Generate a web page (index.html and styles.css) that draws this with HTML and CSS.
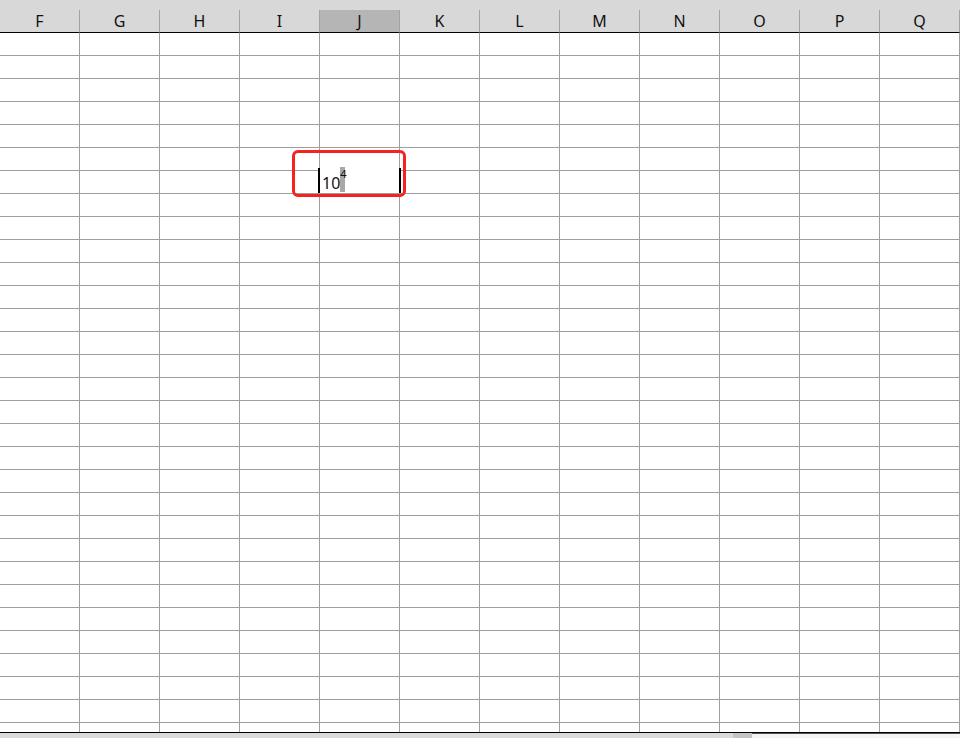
FILE: index.html
```html
<html>
<head>
<meta name="viewport" content="width=device-width, initial-scale=1" />
<title>Sheet1</title>
<link rel="stylesheet" href="styles.css">
</head>
<body>

<div class="sheet">
<div class="viewport">
<table class="grid">
    <thead>
        <tr><th>F</th><th>G</th><th>H</th><th>I</th><th class="sel">J</th><th>K</th><th>L</th><th>M</th><th>N</th><th>O</th><th>P</th><th>Q</th></tr>
    </thead>
    <tbody>
        <tr><td></td><td></td><td></td><td></td><td></td><td></td><td></td><td></td><td></td><td></td><td></td><td></td></tr>
        <tr><td></td><td></td><td></td><td></td><td></td><td></td><td></td><td></td><td></td><td></td><td></td><td></td></tr>
        <tr><td></td><td></td><td></td><td></td><td></td><td></td><td></td><td></td><td></td><td></td><td></td><td></td></tr>
        <tr><td></td><td></td><td></td><td></td><td></td><td></td><td></td><td></td><td></td><td></td><td></td><td></td></tr>
        <tr><td></td><td></td><td></td><td></td><td></td><td></td><td></td><td></td><td></td><td></td><td></td><td></td></tr>
        <tr><td></td><td></td><td></td><td></td><td></td><td></td><td></td><td></td><td></td><td></td><td></td><td></td></tr>
        <tr><td></td><td></td><td></td><td></td><td class="active"><div class="editor">10<span class="sup">4</span></div></td><td></td><td></td><td></td><td></td><td></td><td></td><td></td></tr>
        <tr><td></td><td></td><td></td><td></td><td></td><td></td><td></td><td></td><td></td><td></td><td></td><td></td></tr>
        <tr><td></td><td></td><td></td><td></td><td></td><td></td><td></td><td></td><td></td><td></td><td></td><td></td></tr>
        <tr><td></td><td></td><td></td><td></td><td></td><td></td><td></td><td></td><td></td><td></td><td></td><td></td></tr>
        <tr><td></td><td></td><td></td><td></td><td></td><td></td><td></td><td></td><td></td><td></td><td></td><td></td></tr>
        <tr><td></td><td></td><td></td><td></td><td></td><td></td><td></td><td></td><td></td><td></td><td></td><td></td></tr>
        <tr><td></td><td></td><td></td><td></td><td></td><td></td><td></td><td></td><td></td><td></td><td></td><td></td></tr>
        <tr><td></td><td></td><td></td><td></td><td></td><td></td><td></td><td></td><td></td><td></td><td></td><td></td></tr>
        <tr><td></td><td></td><td></td><td></td><td></td><td></td><td></td><td></td><td></td><td></td><td></td><td></td></tr>
        <tr><td></td><td></td><td></td><td></td><td></td><td></td><td></td><td></td><td></td><td></td><td></td><td></td></tr>
        <tr><td></td><td></td><td></td><td></td><td></td><td></td><td></td><td></td><td></td><td></td><td></td><td></td></tr>
        <tr><td></td><td></td><td></td><td></td><td></td><td></td><td></td><td></td><td></td><td></td><td></td><td></td></tr>
        <tr><td></td><td></td><td></td><td></td><td></td><td></td><td></td><td></td><td></td><td></td><td></td><td></td></tr>
        <tr><td></td><td></td><td></td><td></td><td></td><td></td><td></td><td></td><td></td><td></td><td></td><td></td></tr>
        <tr><td></td><td></td><td></td><td></td><td></td><td></td><td></td><td></td><td></td><td></td><td></td><td></td></tr>
        <tr><td></td><td></td><td></td><td></td><td></td><td></td><td></td><td></td><td></td><td></td><td></td><td></td></tr>
        <tr><td></td><td></td><td></td><td></td><td></td><td></td><td></td><td></td><td></td><td></td><td></td><td></td></tr>
        <tr><td></td><td></td><td></td><td></td><td></td><td></td><td></td><td></td><td></td><td></td><td></td><td></td></tr>
        <tr><td></td><td></td><td></td><td></td><td></td><td></td><td></td><td></td><td></td><td></td><td></td><td></td></tr>
        <tr><td></td><td></td><td></td><td></td><td></td><td></td><td></td><td></td><td></td><td></td><td></td><td></td></tr>
        <tr><td></td><td></td><td></td><td></td><td></td><td></td><td></td><td></td><td></td><td></td><td></td><td></td></tr>
        <tr><td></td><td></td><td></td><td></td><td></td><td></td><td></td><td></td><td></td><td></td><td></td><td></td></tr>
        <tr><td></td><td></td><td></td><td></td><td></td><td></td><td></td><td></td><td></td><td></td><td></td><td></td></tr>
        <tr><td></td><td></td><td></td><td></td><td></td><td></td><td></td><td></td><td></td><td></td><td></td><td></td></tr>
        <tr><td></td><td></td><td></td><td></td><td></td><td></td><td></td><td></td><td></td><td></td><td></td><td></td></tr>
    </tbody>
</table>
<div class="callout"></div>
</div>
<div class="hscroll">
    <div class="tabs"></div>
    <div class="thumb"></div>
    <div class="track"></div>
</div>
</div>

</body>
</html>
```

FILE: styles.css
```css
body { margin: 0; background: #fff; font-family: "Noto Sans", "Open Sans", sans-serif; }
.sheet { width: 960px; height: 738px; overflow: hidden; display: flex; flex-direction: column; }
.viewport { position: relative; height: 732px; flex: none; overflow: hidden; background: #d8d8d8; padding-top: 10px; box-sizing: border-box; }

.grid { border-collapse: separate; border-spacing: 0; table-layout: fixed; width: 960px; background: #fff; }
.grid th { width: 79px; height: 23px; padding: 0; background: #d8d8d8; border-right: 1px solid #a2a2a2; border-bottom: 1px solid #000; font-weight: normal; font-size: 16px; line-height: 22px; color: #111; text-align: center; }
.grid th.sel { background: #b5b5b5; }
.grid td { width: 79px; height: 23px; padding: 0; border-right: 1px solid #9e9e9e; border-bottom: 1px solid #9e9e9e; }
.grid td.active { position: relative; }

.editor { position: absolute; left: -2px; top: -3px; width: 83px; height: 25px; box-sizing: border-box; background: #fff; border-left: 2px solid #000; border-right: 2px solid #000; padding: 4px 0 0 2px; font-size: 16px; line-height: 22px; color: #111; white-space: nowrap; }
.editor .sup { display: inline-block; vertical-align: top; margin-top: -5px; height: 25px; width: 5px; background: #a8a8a8; font-size: 11px; line-height: 13px; text-align: center; }

.callout { position: absolute; left: 292px; top: 150px; width: 114px; height: 47px; box-sizing: border-box; border: 3px solid #f4231f; border-radius: 6px; }

.hscroll { display: flex; height: 6px; flex: none; border-top: 1px solid #000; background: #d8d8d8; }
.hscroll .tabs { width: 733px; background: #dadada; }
.hscroll .thumb { width: 19px; background: #c4c4c4; }
.hscroll .track { flex: 1; background: #f4f4f4; border-top: 1px solid #555; }
```
